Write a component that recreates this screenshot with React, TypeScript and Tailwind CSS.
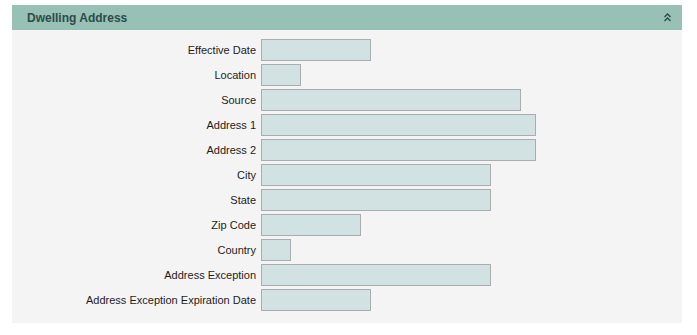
import React from "react";

const rows: { label: string; w: string }[] = [
  { label: "Effective Date", w: "w-[110px]" },
  { label: "Location", w: "w-[40px]" },
  { label: "Source", w: "w-[260px]" },
  { label: "Address 1", w: "w-[275px]" },
  { label: "Address 2", w: "w-[275px]" },
  { label: "City", w: "w-[230px]" },
  { label: "State", w: "w-[230px]" },
  { label: "Zip Code", w: "w-[100px]" },
  { label: "Country", w: "w-[30px]" },
  { label: "Address Exception", w: "w-[230px]" },
  { label: "Address Exception Expiration Date", w: "w-[110px]" },
];

export default function App() {
  return (
    <div className="w-[697px] h-[335px] bg-white pt-[5px] pl-[12px] font-['Liberation_Sans',Arial,sans-serif]">
      <div className="w-[670px]">
        <div className="h-[25px] bg-[#96c1b4] flex items-center justify-between pl-[15px] pr-[11px]">
          <span className="text-[12px] font-bold text-[#2e4a4a]">Dwelling Address</span>
          <svg width="7" height="9" viewBox="0 0 7 9" className="text-[#2e4a4a]">
            <path d="M0.5 4 L3.5 1 L6.5 4 M0.5 8 L3.5 5 L6.5 8" stroke="currentColor" strokeWidth="1.4" fill="none" />
          </svg>
        </div>
        <div className="bg-[#f4f4f4] pt-[9px] pb-[12px] flex flex-col gap-[3px]">
          {rows.map((r) => (
            <div key={r.label} className="flex items-center h-[22px]">
              <div className="w-[249px] pr-[5px] text-right text-[11px] text-[#1c1c1c]">{r.label}</div>
              <div className={`${r.w} h-[22px] bg-[#d2e1e1] border border-[#a9adae]`} />
            </div>
          ))}
        </div>
      </div>
    </div>
  );
}
